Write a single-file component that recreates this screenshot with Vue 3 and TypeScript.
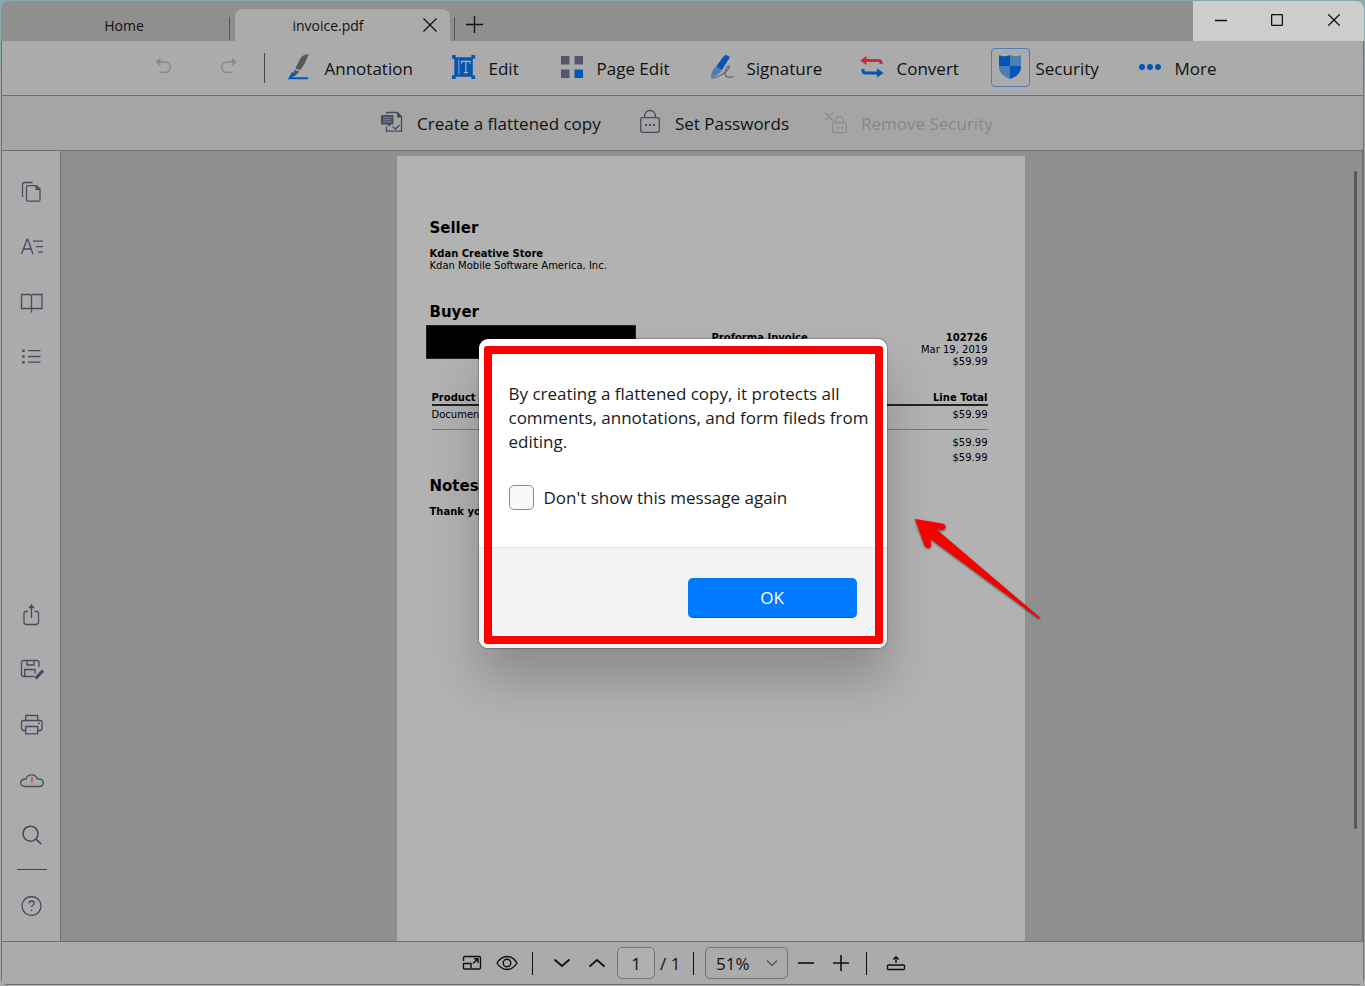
<script setup lang="ts">
import { ref } from 'vue'

const page = ref('1')
const zoom = ref('51%')
const hideMessage = ref(false)
</script>

<template>
  <div class="desktop">
    <main class="window">
      <header class="titlebar">
        <button class="tab" type="button">Home</button>
        <span class="tab-sep"></span>
        <div class="tab active">
          <span class="tab-name">invoice.pdf</span>
          <button class="tab-close" type="button" aria-label="Close tab">
            <svg width="14" height="14" viewBox="0 0 14 14"><path d="M.5.5l13 13M13.5.5l-13 13" /></svg>
          </button>
        </div>
        <span class="tab-sep"></span>
        <button class="tab-add" type="button" aria-label="New tab">
          <svg width="17" height="17" viewBox="0 0 17 17"><path d="M8.5 0v17M0 8.5h17" /></svg>
        </button>
        <div class="caption">
          <button type="button" aria-label="Minimize"><svg width="12" height="12" viewBox="0 0 12 12"><path d="M0 6.5h12" /></svg></button>
          <button type="button" aria-label="Maximize"><svg width="12" height="12" viewBox="0 0 12 12"><rect x=".6" y=".6" width="10.8" height="10.8" rx="1" /></svg></button>
          <button type="button" aria-label="Close"><svg width="12" height="12" viewBox="0 0 12 12"><path d="M.3.3l11.4 11.4M11.7.3L.3 11.7" /></svg></button>
        </div>
      </header>

      <nav class="toolbar">
        <button class="tool history" type="button" aria-label="Undo" disabled>
          <svg width="24" height="24" viewBox="0 0 24 24"><path d="M6 7h7a5 5 0 0 1 0 10.500H8" fill="none" stroke="#88888f" stroke-width="1.500" stroke-linecap="round" /><path d="M3.500 7L8.300 3v8z" fill="#88888f" /></svg>
        </button>
        <button class="tool history" type="button" aria-label="Redo" disabled>
          <svg width="24" height="24" viewBox="0 0 24 24"><path d="M17 7h-7a5 5 0 0 0 0 10.500h5" fill="none" stroke="#88888f" stroke-width="1.500" stroke-linecap="round" /><path d="M19.700 7L15 3v8z" fill="#88888f" /></svg>
        </button>
        <span class="tool-sep"></span>
        <button class="tool" type="button">
          <svg width="24" height="28" viewBox="0 0 24 28"><path d="M20.500 1.200c-5 0-7.500 2.500-9 5.800L7.200 15.500l5 1.500c3.500-4 6-9 8.300-15.800z" fill="#555769" /><path d="M6 16.800l5.400 1.600-2 2.600-3.600.8z" fill="#555769" /><path d="M5 19.500L1.500 25.200H20" fill="none" stroke="#0556b2" stroke-width="2" /><path d="M5 19.500l3.500 2.200L3 25z" fill="#0556b2" /></svg>
          <span>Annotation</span>
        </button>
        <button class="tool" type="button">
          <svg width="26" height="26" viewBox="0 0 26 26"><path d="M2.500 2.500h20v21h-20z" fill="#0556b2" /><path d="M0 0h4v4H0zM21 0h4v4h-4zM0 22h4v4H0zM21 22h4v4h-4z" fill="#0556b2" /><path d="M7.500 5v16" stroke="#b0b0b0" stroke-width="1" /><path d="M10.500 9.500V7h9v2.500M15 7v12M12.800 19h4.400" fill="none" stroke="#b0b0b0" stroke-width="1.300" /></svg>
          <span>Edit</span>
        </button>
        <button class="tool" type="button">
          <svg width="24" height="24" viewBox="0 0 24 24"><path d="M1 1h8.500v8.500H1zM14.500 1H23v8.500h-8.500zM1 14.500h8.500V23H1z" fill="#555769" /><path d="M14.500 14.500H23V23h-8.500z" fill="#0556b2" /></svg>
          <span>Page Edit</span>
        </button>
        <button class="tool" type="button">
          <svg width="24" height="26" viewBox="0 0 24 26"><path d="M13.500 3l2.200-2.200 4 2L18.500 6z" fill="#0556b2" /><path d="M13.500 2.200l5 3-6.700 11-5.500-3.600z" fill="#0556b2" /><path d="M6.300 12.600l5.500 3.600C9.500 20 6 22 1 24c.2-5 1.600-8.500 5.300-11.400z" fill="#4b7db7" /><path d="M1.500 24.200c6.500-.5 10.500-3.500 13.800-6 2.500-2 5.500-5.500 3.600-6-2-.5-5 6.500-3.200 9.500 1.500 2.500 4.500 1.800 7.500 1" fill="none" stroke="#666878" stroke-width="1.300" /></svg>
          <span>Signature</span>
        </button>
        <button class="tool" type="button">
          <svg width="24" height="24" viewBox="0 0 24 24"><path d="M5 5.500h13.500q2.500 0 2.500 2.300V9" fill="none" stroke="#bc3336" stroke-width="3" /><path d="M0 5.500L6.500 1v9z" fill="#bc3336" /><path d="M3 14v1.700q0 2.300 2.500 2.300H18" fill="none" stroke="#0556b2" stroke-width="3" /><path d="M23.500 18L17 13.500v9z" fill="#0556b2" /></svg>
          <span>Convert</span>
        </button>
        <button class="tool selected" type="button">
          <span class="tool-frame">
            <svg width="24" height="26" viewBox="0 0 24 26"><path d="M12 1C8.500 2.700 5 2.500 1 1.300V12h11z" fill="#0556b2" /><path d="M12 1c3.500 1.700 7 1.500 11 .3V12H12z" fill="#4b7db7" /><path d="M1 12h11v13C5 22.500.8 18.500 1 12z" fill="#4b7db7" /><path d="M23 12H12v13c7-2.500 11.200-6.500 11-13z" fill="#0556b2" /></svg>
          </span>
          <span>Security</span>
        </button>
        <button class="tool" type="button">
          <svg width="24" height="24" viewBox="0 0 24 24" fill="#0556b2"><circle cx="4" cy="12" r="3" /><circle cx="12" cy="12" r="3" /><circle cx="20" cy="12" r="3" /></svg>
          <span>More</span>
        </button>
      </nav>

      <nav class="subbar">
        <button class="tool" type="button">
          <svg width="24" height="24" viewBox="0 0 24 24"><path d="M6.500 2.500h11l4 4v14.700h-15v-5M6.500 2.500V4" fill="none" stroke="#484a60" stroke-width="1.300" /><path d="M17 2v5.500h5z" fill="#484a60" /><path d="M2 5h10.500q1 0 1 1v7.500q0 1-1 1H11l-2 2-2-2H2q-1 0-1-1V6q0-1 1-1z" fill="#484a60" /><path d="M3 7.500h8.500M3 9.700h8.500M3 12h8.500" stroke="#85869a" stroke-width="1" /><path d="M12.500 16.500l3 2.500 4-4" fill="none" stroke="#484a60" stroke-width="1.300" /></svg>
          <span>Create a flattened copy</span>
        </button>
        <button class="tool" type="button">
          <svg width="24" height="24" viewBox="0 0 24 24"><rect x="2.700" y="7.700" width="18.600" height="14.600" rx="2" fill="none" stroke="#484a60" stroke-width="1.300" /><path d="M6.500 7.500V6a5.500 5.500 0 0 1 11 0v1.500" fill="none" stroke="#484a60" stroke-width="1.300" /><path d="M7 14h2v2H7zM11 14h2v2h-2zM15 14h2v2h-2z" fill="#484a60" /></svg>
          <span>Set Passwords</span>
        </button>
        <button class="tool" type="button" disabled>
          <svg width="24" height="24" viewBox="0 0 24 24"><path d="M1 2.500l8 8M9 2.500l-8 8M11.500 12v-1.500a4 4 0 0 1 8 0V12" fill="none" stroke="#8a8a90" stroke-width="1.200" /><rect x="8.600" y="12.600" width="13.800" height="10" rx="1.500" fill="none" stroke="#8a8a90" stroke-width="1.200" /><path d="M12 17h1.500v1.500H12zM14.800 17h1.500v1.500h-1.500zM17.600 17h1.500v1.500h-1.500z" fill="#8a8a90" /></svg>
          <span>Remove Security</span>
        </button>
      </nav>

      <div class="workspace">
        <aside class="sidebar">
          <button type="button" aria-label="Thumbnails"><svg viewBox="0 0 24 24"><path d="M2.500 17V4.500q0-2 2-2h8" /><path d="M16.500 5.700H8q-1.500 0-1.500 1.500v12.500q0 1.500 1.500 1.500h10.500q1.500 0 1.500-1.500V9z" /><path d="M15.500 5.500v4.500H20z" class="solid" /></svg></button>
          <button type="button" aria-label="Text outline"><svg viewBox="0 0 24 24"><path d="M1.500 19L7 4.500h.8L13 19M3.500 14h7.700M13 6.200h10M16 11.700h7M18 17.200h5" /></svg></button>
          <button type="button" aria-label="Reader"><svg viewBox="0 0 24 24"><path d="M11.500 5.500L10 4.500H1.500v14h9.500l.5 .5 .5-.5h10v-14H13zM11.500 5.500v17" /></svg></button>
          <button type="button" aria-label="Bookmarks"><svg viewBox="0 0 24 24"><path d="M8 5.700h12.500M8 11.500h12.500M8 17.200h12.500" /><path d="M2.300 4.500h2.400v2.400H2.300zM2.300 10.300h2.400v2.400H2.300zM2.300 16h2.400v2.400H2.300z" class="solid" /></svg></button>
          <span class="grow"></span>
          <button type="button" aria-label="Share"><svg viewBox="0 0 24 24"><path d="M8 8.500H5.500q-1.500 0-1.500 1.500v9q0 2.500 2.500 2.500h9.500q2.500 0 2.500-2.500v-9q0-1.500-1.500-1.500h-2.500M11.500 15V4" /><path d="M11.500 1l3.300 4.200H8.200z" class="solid" /></svg></button>
          <button type="button" aria-label="Save as"><svg viewBox="0 0 24 24"><path d="M19 9V4.500q0-2-2-2H3.500q-2 0-2 2V16q0 2.500 2.500 2.500h10M7 2.500V7h7V2.500M4.700 18.500v-7H15v4" /><path d="M23 12.500l-7.500 8" stroke-width="3.200" /></svg></button>
          <button type="button" aria-label="Print"><svg viewBox="0 0 24 24"><path d="M5.700 7.500v-5h12v5M5.700 17.500h-2Q1.500 17.500 1.500 15V9q0-1.500 1.500-1.500h17.500q1.500 0 1.500 1.500v6q0 2.500-2 2.500h-2.300M5.700 13.500h12v7.300h-12z" /><path d="M18 10.300h2" /></svg></button>
          <button type="button" aria-label="Cloud status"><svg viewBox="0 0 24 24"><path d="M4.500 18.500C-1 18-.5 11 6 11c1-5 9.500-6 11.500 0 7-.5 7.500 7 2 7.500z" /><path d="M12 9v5.500M12 15.700v1" stroke="#b84444" /></svg></button>
          <button type="button" aria-label="Search"><svg viewBox="0 0 24 24"><circle cx="10.500" cy="10.700" r="7.500" stroke-width="1.600" /><path d="M16 16.200l5.300 5" stroke-width="1.600" /></svg></button>
          <span class="side-line"></span>
          <button type="button" aria-label="Help"><svg viewBox="0 0 24 24"><circle cx="11.500" cy="12" r="9.500" /><path d="M9 9.500q.2-2.500 2.600-2.500 2.500 0 2.500 2.200 0 1.300-1.300 2-1.200.8-1.200 2M11.600 15.400v1.600" /></svg></button>
        </aside>

        <section class="canvas">
          <article class="sheet">
            <h2>Seller</h2>
            <p class="bold">Kdan Creative Store</p>
            <p>Kdan Mobile Software America, Inc.</p>
            <h2 class="buyer">Buyer</h2>
            <div class="meta">
              <div class="redacted"></div>
              <p class="bold kind">Proforma Invoice</p>
              <div class="ref">
                <p class="bold">102726</p>
                <p>Mar 19, 2019</p>
                <p>$59.99</p>
              </div>
            </div>
            <table>
              <thead><tr><th>Product</th><th>Line Total</th></tr></thead>
              <tbody><tr><td>Document</td><td>$59.99</td></tr></tbody>
              <tfoot>
                <tr><td></td><td>$59.99</td></tr>
                <tr><td></td><td>$59.99</td></tr>
              </tfoot>
            </table>
            <h2>Notes</h2>
            <p class="bold">Thank you</p>
          </article>
          <span class="scroll-thumb"></span>
        </section>
      </div>

      <footer class="status">
        <button type="button" aria-label="Fit window" class="wide"><svg width="20" height="16" viewBox="0 0 20 16"><path d="M1.500 6V3q0-1.500 1.500-1.500h14q1.500 0 1.500 1.500v9.500q0 1.500-1.500 1.500h-7M1.500 8.500H9V14H2.500q-1 0-1-1zM11 8.500l5-4.700M12 3.800h4V8" /></svg></button>
        <button type="button" aria-label="View mode" class="wide"><svg width="22" height="16" viewBox="0 0 22 16"><path d="M1 8q4-6.500 10-6.500T21 8q-4 6.500-10 6.500T1 8z" /><circle cx="11" cy="8" r="3.800" /></svg></button>
        <span class="status-sep"></span>
        <button type="button" aria-label="Next page" class="wide"><svg width="18" height="12" viewBox="0 0 18 12"><path d="M1.500 2.500L9 9l7.500-6.500" stroke-width="1.800" /></svg></button>
        <button type="button" aria-label="Previous page" class="wide"><svg width="18" height="12" viewBox="0 0 18 12"><path d="M1.500 9.500L9 3l7.500 6.500" stroke-width="1.800" /></svg></button>
        <input v-model="page" class="page-box" type="text" aria-label="Page number" />
        <span class="total">/ 1</span>
        <span class="status-sep"></span>
        <span class="zoom">
          <select v-model="zoom" aria-label="Zoom level"><option>51%</option><option>100%</option></select>
          <svg width="12" height="8" viewBox="0 0 12 8"><path d="M1 1.500l5 5 5-5" /></svg>
        </span>
        <button type="button" aria-label="Zoom out" class="wide"><svg width="16" height="16" viewBox="0 0 16 16"><path d="M0 8h16" stroke-width="1.600" /></svg></button>
        <button type="button" aria-label="Zoom in" class="wide"><svg width="16" height="16" viewBox="0 0 16 16"><path d="M0 8h16M8 0v16" stroke-width="1.600" /></svg></button>
        <span class="status-sep"></span>
        <button type="button" aria-label="Export" class="wide"><svg width="20" height="16" viewBox="0 0 20 16"><rect x="1.500" y="10" width="17" height="4.500" rx="1" /><path d="M10 8V2M7.300 4.500L10 1.800l2.700 2.700" /></svg></button>
      </footer>
    </main>

    <div class="modal-layer">
      <div class="dialog" role="dialog" aria-label="Flattened copy">
        <div class="dialog-body">
          <p>By creating a flattened copy, it protects all comments, annotations, and form fileds from editing.</p>
          <label><input v-model="hideMessage" type="checkbox" /><span>Don't show this message again</span></label>
        </div>
        <div class="dialog-foot"><button type="button">OK</button></div>
        <span class="highlight"></span>
        <svg class="arrow" width="130" height="106" viewBox="0 0 130 106"><path d="M2 2L29 6.500Q34 8 32 11.500Q31 14 23 12L127 100.500L126 101.500L17 21.500Q19 29 17 30.500Q13 32 11 27Z" /></svg>
      </div>
    </div>
  </div>
</template>

<style>
body {
  margin: 0;
}
</style>

<style scoped>
* {
  box-sizing: border-box;
}
.desktop {
  position: relative;
  min-height: 100vh;
  display: flex;
  padding: 1px;
  background: linear-gradient(#82aab0 0 30px, #a9a9a9 90px);
  font-family: "Open Sans", "Noto Sans", sans-serif;
  font-size: 17px;
  color: #111;
}
button,
input,
select {
  font: inherit;
  color: inherit;
  background: none;
  border: 0;
  padding: 0;
  margin: 0;
}
button {
  display: flex;
  align-items: center;
  justify-content: center;
}
svg {
  flex: none;
}
p,
h2 {
  margin: 0;
}
.window {
  flex: 1;
  display: flex;
  flex-direction: column;
  border-radius: 8px 8px 6px 6px;
  overflow: hidden;
  background: #ababab;
}
.titlebar {
  display: flex;
  align-items: flex-end;
  height: 40px;
  background: #8f8f8f;
  font-size: 14px;
}
.titlebar svg {
  fill: none;
  stroke: #111;
  stroke-width: 1.3;
}
.tab {
  width: 228px;
  height: 32px;
  padding-left: 18px;
}
.tab-sep {
  width: 1px;
  height: 23px;
  margin-bottom: 1px;
  background: #555;
}
.tab.active {
  display: flex;
  align-items: center;
  width: 215px;
  margin: 0 4px 0 5px;
  padding: 0 12px 0 0;
  background: #ababab;
  border-radius: 8px 8px 0 0;
}
.tab-name {
  flex: 1;
  text-align: center;
}
.tab-close {
  width: 17px;
  height: 24px;
}
.tab-add {
  width: 38px;
  height: 33px;
}
.caption {
  display: flex;
  width: 171px;
  height: 40px;
  margin-left: auto;
  padding: 0 2px 2px 0;
  background: #cdcdcd;
}
.caption button {
  flex: 1;
}
.toolbar,
.subbar {
  display: grid;
  justify-content: center;
  align-items: center;
  height: 55px;
  border: solid #6f6f6f;
  border-width: 0 1px 1px;
}
.toolbar {
  grid-template-columns: 65px 47px 24px 164px 108px 150px 150px 131px 147px 78px;
  padding-left: 2px;
}
.subbar {
  grid-template-columns: 258px 186px 165px;
  padding-left: 4px;
  background: #a5a5a5;
}
.tool {
  justify-content: flex-start;
  gap: 13px;
  white-space: nowrap;
}
.tool > svg {
  width: 24px;
  margin-bottom: 2px;
  overflow: visible;
}
.tool:disabled {
  color: #888;
}
.tool-sep {
  width: 1px;
  height: 30px;
  background: #444;
}
.selected {
  gap: 6px;
}
.tool-frame {
  display: flex;
  align-items: center;
  justify-content: center;
  width: 39px;
  height: 39px;
  margin-bottom: 2px;
  border: 1px solid #4b7db7;
  border-radius: 4px;
}
.workspace {
  flex: 1;
  display: flex;
  border: solid #6f6f6f;
  border-width: 0 2px 1px 1px;
}
.sidebar {
  display: flex;
  flex-direction: column;
  align-items: center;
  width: 59px;
  padding: 13px 0 8px 1px;
  border-right: 1px solid #6f6f6f;
}
.sidebar button {
  width: 100%;
  height: 55px;
}
.sidebar svg {
  width: 24px;
  height: 24px;
  fill: none;
  stroke: #484a60;
  stroke-width: 1.3;
}
.sidebar .solid {
  fill: #484a60;
  stroke: none;
}
.grow {
  flex: 1;
}
.side-line {
  width: 30px;
  height: 1px;
  margin: 7px 0 8px;
  background: #444;
}
.canvas {
  flex: 1;
  display: flex;
  position: relative;
  justify-content: center;
  padding: 5px 2px 0 0;
  background: #8f8f8f;
}
.sheet {
  width: 628px;
  padding: 61px 37px 0 33px;
  background: #b2b2b2;
  color: #000;
  font-family: "DejaVu Sans", sans-serif;
  font-size: 10px;
  line-height: 12px;
}
.sheet h2 {
  margin-bottom: 9px;
  font-size: 15px;
  line-height: 22px;
}
.bold {
  font-weight: bold;
}
.sheet .buyer {
  margin: 29px 0 2px;
}
.meta {
  display: flex;
  height: 66px;
}
.redacted {
  width: 210px;
  height: 34px;
  margin-left: -4px;
  background: #000;
  border: 1px solid #222;
}
.kind {
  margin: 7px 0 0 76px;
}
.ref {
  margin: 7px 0 0 auto;
  text-align: right;
}
.sheet table {
  width: 556px;
  margin: 0 0 10px 2px;
  border-collapse: collapse;
}
.sheet th,
.sheet td {
  padding: 0;
  text-align: left;
  height: 14px;
}
.sheet th {
  border-bottom: 2px solid #222;
}
.sheet tbody td {
  height: 24px;
  padding-bottom: 4px;
  border-bottom: 1px solid #777;
}
.sheet tfoot tr:first-child td {
  height: 22px;
  padding-top: 6px;
}
.sheet th:last-child,
.sheet td:last-child {
  text-align: right;
}
.scroll-thumb {
  position: absolute;
  top: 20px;
  right: 5px;
  bottom: 112px;
  width: 3px;
  border-radius: 2px;
  background: #585858;
}
.status {
  display: flex;
  align-items: center;
  justify-content: center;
  height: 43px;
  padding-left: 2px;
  border: solid #6f6f6f;
  border-width: 0 1px 1px;
}
.status svg {
  fill: none;
  stroke: #111;
  stroke-width: 1.4;
}
.wide {
  width: 35px;
  height: 32px;
}
.status-sep {
  width: 1px;
  height: 23px;
  margin: 0 11px 0 8px;
  background: #111;
}
.page-box {
  width: 38px;
  height: 32px;
  margin: 0 5px 0 3px;
  border: 1px solid #747474;
  border-radius: 5px;
  background: #b0b0b0;
  text-align: center;
}
.total {
  width: 25px;
}
.zoom {
  display: grid;
  align-items: center;
  width: 83px;
}
.zoom > * {
  grid-area: 1 / 1;
}
.zoom select {
  height: 32px;
  padding-left: 10px;
  border: 1px solid #747474;
  border-radius: 5px;
  appearance: none;
}
.zoom svg {
  justify-self: end;
  margin-right: 10px;
  stroke: #555;
  pointer-events: none;
}
.modal-layer {
  position: absolute;
  inset: 0;
  display: flex;
  align-items: center;
  justify-content: center;
}
.dialog {
  position: relative;
  width: 408px;
  border-radius: 9px;
  background: #fff;
  color: #1a1a1a;
  box-shadow: 0 0 1px 1px rgba(0, 0, 0, 0.25), 0 32px 50px rgba(0, 0, 0, 0.22);
}
.dialog-body {
  height: 208px;
  padding: 43px 12px 0 30px;
}
.dialog-body p {
  line-height: 24px;
}
.dialog-body label {
  display: flex;
  align-items: center;
  gap: 10px;
  margin-top: 31px;
}
.dialog-body input {
  appearance: none;
  width: 25px;
  height: 25px;
  border: 1px solid #8a8a8a;
  border-radius: 5px;
  background: #f9f9f9;
}
.dialog-foot {
  display: flex;
  justify-content: flex-end;
  height: 101px;
  padding: 30px 30px 0;
  border-top: 1px solid #e3e3e3;
  border-radius: 0 0 9px 9px;
  background: #f3f3f3;
}
.dialog-foot button {
  width: 169px;
  height: 40px;
  border-radius: 5px;
  border-bottom: 1px solid #005ec4;
  background: #007aff;
  color: #fff;
}
.highlight {
  position: absolute;
  inset: 7px 4px 4px 5px;
  border: 8px solid #f00;
  border-radius: 3px;
  pointer-events: none;
}
.arrow {
  position: absolute;
  left: 434px;
  top: 178px;
  fill: #f60000;
  filter: drop-shadow(0 1px 1px rgba(0, 0, 0, 0.6));
}
</style>
